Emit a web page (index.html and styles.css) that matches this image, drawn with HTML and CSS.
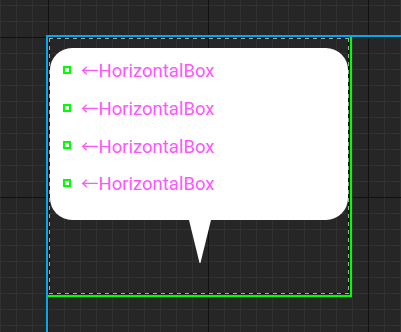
FILE: index.html
```html
<!DOCTYPE html>
<html lang="en">
<head>
    <meta charset="UTF-8">
    <meta name="viewport" content="width=device-width, initial-scale=1.0">
    <title>HorizontalBox bubble</title>
    <link rel="stylesheet" href="styles.css">
</head>
<body>
    <!-- 設計畫面框 -->
    <div class="frame">
        <div class="bubble">
            <div class="row"><span class="handle"></span><span class="label"><span class="arrow">←</span>HorizontalBox</span></div>
            <div class="row"><span class="handle"></span><span class="label"><span class="arrow">←</span>HorizontalBox</span></div>
            <div class="row"><span class="handle"></span><span class="label"><span class="arrow">←</span>HorizontalBox</span></div>
            <div class="row"><span class="handle"></span><span class="label"><span class="arrow">←</span>HorizontalBox</span></div>
        </div>
        <div class="tail"></div>
        <div class="outline"></div>
    </div>
</body>
</html>
```

FILE: styles.css
```css
/* 格線背景 */
html, body {
    margin: 0;
    width: 401px;
    height: 332px;
    overflow: hidden;
}

body {
    background-color: #262626;
    background-image:
        linear-gradient(to right, #111 1px, transparent 1px),
        linear-gradient(to bottom, #111 1px, transparent 1px),
        linear-gradient(to right, #323232 1px, transparent 1px),
        linear-gradient(to bottom, #323232 1px, transparent 1px);
    background-size: 160px 160px, 160px 160px, 16px 16px, 16px 16px;
    background-position: 48px 0, 0 37px, 0 0, 0 5px;
    font-family: Roboto, "Noto Sans", sans-serif;
    display: flow-root;
}

/* 外框 */
.frame {
    position: relative;
    width: 302px;
    height: 258px;
    margin: 37px 0 0 48px;
    border-right: 2px solid #00ff00;
    border-bottom: 2px solid #00ff00;
    display: flex;
    flex-direction: column;
}

/* 藍色參考線 */
.frame::before {
    content: "";
    position: absolute;
    left: -2px;
    top: -2px;
    width: 355px;
    height: 297px;
    box-sizing: border-box;
    border-top: 2px solid #00aaee;
    border-left: 2px solid #00aaee;
}

/* 虛線框 */
.outline {
    position: absolute;
    inset: 1px;
    pointer-events: none;
    background:
        repeating-linear-gradient(to right, #a8a8a8 0 4px, #111 4px 8px) top / 100% 1px no-repeat,
        repeating-linear-gradient(to right, #a8a8a8 0 4px, #111 4px 8px) bottom / 100% 1px no-repeat,
        repeating-linear-gradient(to bottom, #a8a8a8 0 4px, #111 4px 8px) left / 1px 100% no-repeat,
        repeating-linear-gradient(to bottom, #a8a8a8 0 4px, #111 4px 8px) right / 1px 100% no-repeat;
}

/* 對話框 */
.bubble {
    width: 298px;
    height: 172px;
    margin: 11px 0 0 2px;
    padding: 3px 0 0 13px;
    box-sizing: border-box;
    background-color: #fff;
    border-radius: 22px;
    display: flex;
    flex-direction: column;
}

.row {
    height: 37.7px;
    display: flex;
    align-items: center;
    gap: 10px;
}

.handle {
    width: 8px;
    height: 8px;
    box-sizing: border-box;
    border: 2px solid #00ff00;
}

.label {
    font-size: 18.5px;
    color: #ff55ff;
    white-space: nowrap;
}

.arrow {
    font-family: "Noto Sans CJK JP", sans-serif;
    font-size: 17.5px;
}

/* 對話框尾巴 */
.tail {
    width: 22px;
    height: 43px;
    margin-left: 141px;
    background-color: #fff;
    clip-path: polygon(0 0, 100% 0, 52% 100%, 48% 100%);
}
```
